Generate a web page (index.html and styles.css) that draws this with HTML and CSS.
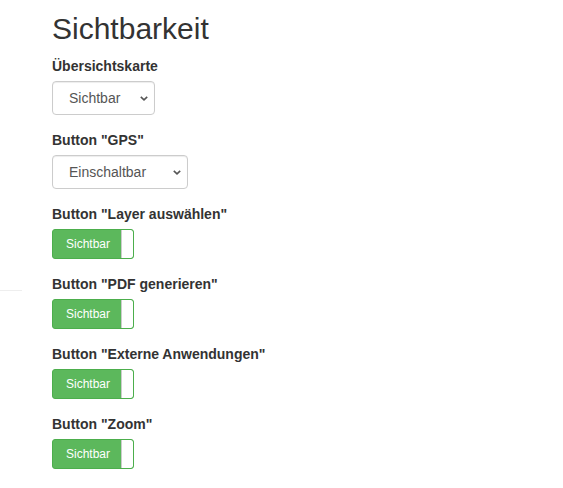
FILE: index.html
```html
<!DOCTYPE html>
<html lang="de">
<head>
  <meta charset="UTF-8">
  <meta name="viewport" content="width=device-width, initial-scale=1.0">
  <title>Sichtbarkeit</title>
  <link rel="stylesheet" href="styles.css">
</head>
<body>

<div class="sidebar-line"></div>

<div class="content">
  <h1>Sichtbarkeit</h1>

  <div class="form-group">
    <label>Übersichtskarte</label>
    <div class="select-wrap select-small">
      <select class="form-control">
        <option>Sichtbar</option>
        <option>Unsichtbar</option>
      </select>
      <svg class="chevron" width="8" height="5" viewBox="0 0 8 5"><path d="M0.8 0.8 L4 3.8 L7.2 0.8" fill="none" stroke="#555" stroke-width="1.6"/></svg>
    </div>
  </div>

  <div class="form-group">
    <label>Button "GPS"</label>
    <div class="select-wrap select-wide">
      <select class="form-control">
        <option>Einschaltbar</option>
        <option>Sichtbar</option>
        <option>Unsichtbar</option>
      </select>
      <svg class="chevron" width="8" height="5" viewBox="0 0 8 5"><path d="M0.8 0.8 L4 3.8 L7.2 0.8" fill="none" stroke="#555" stroke-width="1.6"/></svg>
    </div>
  </div>

  <div class="form-group">
    <label>Button "Layer auswählen"</label>
    <div class="toggle"><span class="toggle-on">Sichtbar</span><span class="toggle-handle"></span></div>
  </div>

  <div class="form-group">
    <label>Button "PDF generieren"</label>
    <div class="toggle"><span class="toggle-on">Sichtbar</span><span class="toggle-handle"></span></div>
  </div>

  <div class="form-group">
    <label>Button "Externe Anwendungen"</label>
    <div class="toggle"><span class="toggle-on">Sichtbar</span><span class="toggle-handle"></span></div>
  </div>

  <div class="form-group">
    <label>Button "Zoom"</label>
    <div class="toggle"><span class="toggle-on">Sichtbar</span><span class="toggle-handle"></span></div>
  </div>
</div>

</body>
</html>
```

FILE: styles.css
```css
body {
    font-family: "Liberation Sans", Arial, sans-serif;
    font-size: 14px;
    line-height: 20px;
    color: #333;
    margin: 0;
    padding: 0;
    background: #fff;
}
.sidebar-line {
    position: absolute;
    left: 0;
    top: 290px;
    width: 22px;
    height: 1px;
    background: #eee;
}
.content {
    padding: 12px 0 0 52px;
}
h1 {
    font-size: 30px;
    font-weight: normal;
    line-height: 33px;
    margin: 0 0 11px 0;
}
.form-group {
    margin-bottom: 15px;
}
label {
    display: block;
    font-weight: bold;
    margin-bottom: 5px;
}
.select-wrap {
    position: relative;
}
.select-small {
    width: 103px;
}
.select-wide {
    width: 136px;
}
.form-control {
    -webkit-appearance: none;
    appearance: none;
    display: block;
    width: 100%;
    height: 34px;
    box-sizing: border-box;
    padding: 6px 12px 6px 16px;
    font-family: inherit;
    font-size: 14px;
    color: #555;
    background: #fff;
    border: 1px solid #ccc;
    border-radius: 4px;
    box-shadow: inset 0 1px 1px rgba(0, 0, 0, .075);
}
.chevron {
    position: absolute;
    right: 7px;
    top: 15px;
    pointer-events: none;
}
.toggle {
    display: flex;
    width: 82px;
    height: 30px;
    box-sizing: border-box;
    border: 1px solid #4cae4c;
    border-radius: 3px;
    background: #5cb85c;
    overflow: hidden;
}
.toggle-on {
    flex: 1;
    display: flex;
    align-items: center;
    justify-content: center;
    color: #fff;
    font-size: 12px;
    padding-left: 2px;
}
.toggle-handle {
    width: 11px;
    background: #fff;
    border-left: 1px solid #ccc;
    border-radius: 0 2px 2px 0;
}
```
